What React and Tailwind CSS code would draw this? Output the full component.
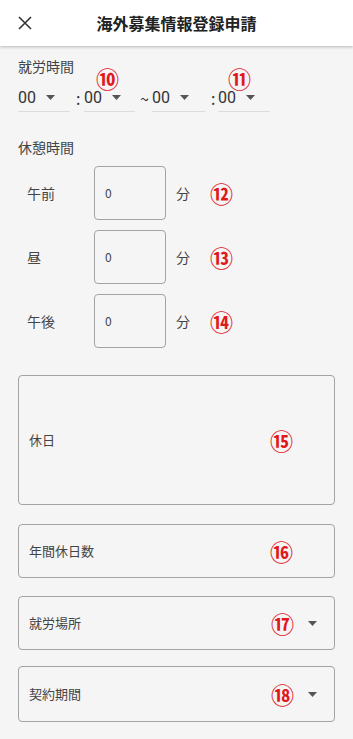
import React from "react";

const font = { fontFamily: '"Noto Sans CJK JP", "Noto Sans", Roboto, sans-serif' };

function Mark({ n, className = "" }) {
  return (
    <span
      className={"text-[23px] leading-none font-bold text-[#e0191f] " + className}
      style={font}
    >
      {n}
    </span>
  );
}

function Caret({ className = "" }) {
  return (
    <svg width="9" height="5" viewBox="0 0 9 5" className={className}>
      <path d="M0 0 L9 0 L4.5 5 Z" fill="#555" />
    </svg>
  );
}

function TimeSelect({ width, children }) {
  return (
    <div
      className="relative flex h-[28px] items-center border-b border-[#dcdcdc]"
      style={{ width }}
    >
      <span className="text-[16px] text-[#333]" style={{ fontFamily: "Roboto, sans-serif" }}>
        00
      </span>
      <Caret className="ml-[10px]" />
      {children}
    </div>
  );
}

function BreakRow({ label, mark }) {
  return (
    <div className="flex h-[54px] items-center">
      <span className="w-[76px] pl-[9px] text-[14px] text-[#444]">{label}</span>
      <div className="flex h-[54px] w-[72px] items-center rounded-[4px] border border-[#a3a3a3] pl-[10px] text-[12px] text-[#444]">
        0
      </div>
      <span className="ml-[10px] text-[14px] text-[#444]">分</span>
      <Mark n={mark} className="ml-[20px]" />
    </div>
  );
}

function Field({ label, mark, height, caret, className = "" }) {
  return (
    <div
      className={
        "flex items-center rounded-[4px] border border-[#a3a3a3] pl-[10px] pr-[17px] " + className
      }
      style={{ height }}
    >
      <span className="flex-1 text-[13px] text-[#444]">{label}</span>
      <Mark n={mark} className={caret ? "mr-[14px]" : "mr-[24px]"} />
      {caret && <Caret />}
    </div>
  );
}

export default function App() {
  return (
    <div className="min-h-[739px] w-full bg-[#f5f5f5]" style={font}>
      <header className="relative flex h-[46px] items-center justify-center bg-white shadow-[0_1px_3px_rgba(0,0,0,0.25)]">
        <svg
          width="14"
          height="14"
          viewBox="0 0 14 14"
          className="absolute left-[18px] top-[16px]"
        >
          <path d="M1 1 L13 13 M13 1 L1 13" stroke="#333" strokeWidth="1.6" />
        </svg>
        <h1 className="text-[16px] font-bold text-[#222]">海外募集情報登録申請</h1>
      </header>

      <main className="px-[18px]">
        <div className="mt-[10px] text-[14px] leading-[20px] text-[#444]">就労時間</div>

        <div className="mt-[8px] flex items-center">
          <TimeSelect width={52} />
          <span className="ml-[6px] w-[8px] text-[16px] text-[#333]">:</span>
          <TimeSelect width={51}>
            <Mark n="⑩" className="absolute left-[12px] top-[-17px]" />
          </TimeSelect>
          <span className="ml-[5px] w-[12px] text-[16px] text-[#333]">~</span>
          <TimeSelect width={53} />
          <span className="ml-[6px] w-[7px] text-[16px] text-[#333]">:</span>
          <TimeSelect width={52}>
            <Mark n="⑪" className="absolute left-[10px] top-[-17px]" />
          </TimeSelect>
        </div>

        <div className="mt-[25px] text-[14px] leading-[20px] text-[#444]">休憩時間</div>

        <div className="mt-[9px] flex flex-col gap-[10px]">
          <BreakRow label="午前" mark="⑫" />
          <BreakRow label="昼" mark="⑬" />
          <BreakRow label="午後" mark="⑭" />
        </div>

        <Field label="休日" mark="⑮" height={130} className="mt-[27px]" />
        <Field label="年間休日数" mark="⑯" height={54} className="mt-[19px]" />
        <Field label="就労場所" mark="⑰" height={54} caret className="mt-[18px]" />
        <Field label="契約期間" mark="⑱" height={56} caret className="mt-[16px]" />
      </main>
    </div>
  );
}
